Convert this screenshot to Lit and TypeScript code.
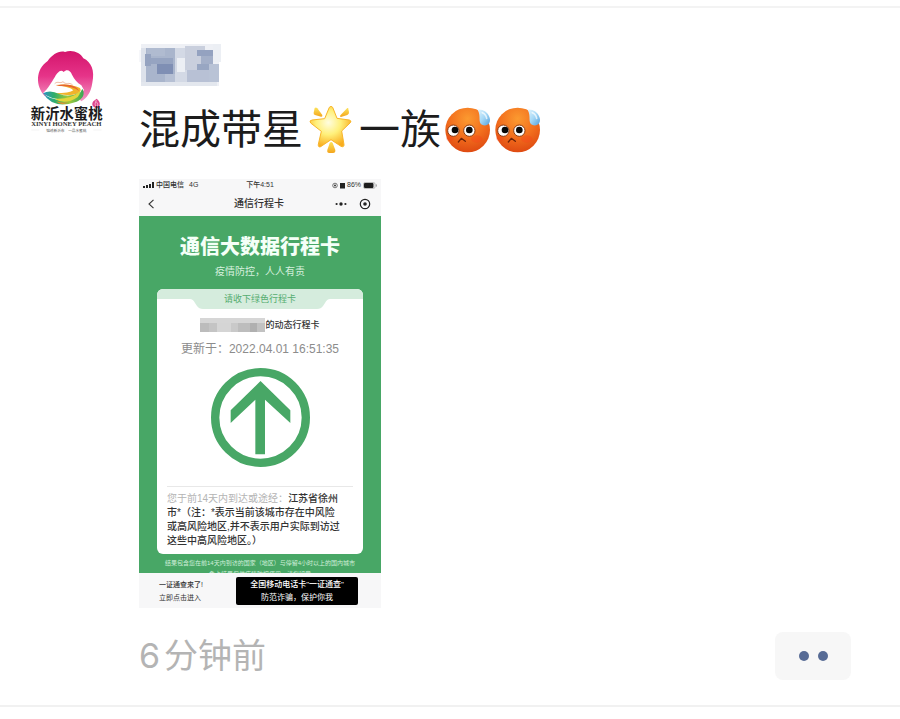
import { LitElement, html, svg, css } from "lit";
import { customElement } from "lit/decorators.js";

type Tile = [number, number, number, number, string];

const nameTiles: Tile[] = [
  [2, 2, 78, 42, "#eef0f5"],
  [0, 8, 8, 12, "#f6f7fa"],
  [2, 6, 8, 36, "#dde2eb"],
  [7, 6, 31, 34, "#a9b5cc"],
  [8, 6, 18, 8, "#b0bbd0"],
  [6, 12, 6, 12, "#95a3c0"],
  [12, 16, 22, 6, "#96a4c1"],
  [18, 22, 16, 10, "#7f8fb4"],
  [26, 32, 12, 8, "#b6c0d4"],
  [36, 6, 12, 34, "#d3d9e5"],
  [38, 16, 8, 14, "#eceff4"],
  [46, 4, 20, 24, "#c9cfdd"],
  [48, 28, 28, 12, "#b8c1d5"],
  [58, 8, 16, 6, "#94a2c0"],
  [62, 14, 12, 8, "#a3afc8"],
  [58, 22, 16, 6, "#98a6c2"],
  [70, 22, 10, 18, "#b9c3d6"],
  [74, 2, 8, 18, "#eceff4"],
  [2, 40, 76, 4, "#e3e7ee"],
];

const holderTiles: Tile[] = [
  [0, 0, 65, 14, "#d6d6d6"],
  [0, 5, 9, 9, "#bcbcbc"],
  [9, 5, 8, 9, "#c4c4c4"],
  [17, 5, 14, 9, "#d5d5d5"],
  [31, 5, 7, 9, "#c9c9c9"],
  [38, 5, 12, 9, "#bdbdbd"],
  [50, 5, 7, 9, "#b0b0b0"],
  [57, 5, 8, 9, "#c2c2c2"],
];

const tiles = (list: Tile[]) =>
  list.map(([x, y, w, h, c]) => svg`<rect x=${x} y=${y} width=${w} height=${h} fill=${c}></rect>`);

@customElement("travel-card")
export class TravelCard extends LitElement {
  static styles = css`
    :host {
      display: block;
      width: 242px;
      overflow: hidden;
      background: #f7f7f8;
      color: #333;
    }
    svg { display: block; }
    .status {
      display: grid;
      grid-template-columns: 1fr auto 1fr;
      align-items: center;
      height: 12px;
      padding: 0 4px;
      font-size: 7px;
      line-height: 12px;
      font-weight: 500;
    }
    .side { display: flex; align-items: center; gap: 2px; }
    .end { justify-content: flex-end; }
    .network { margin-left: 3px; }
    .nav {
      display: grid;
      grid-template-columns: 1fr auto 1fr;
      align-items: center;
      height: 25px;
      padding: 0 10px 0 8px;
    }
    .title { margin: 0; font-size: 10px; line-height: 24px; font-weight: 500; }
    button { border: 0; padding: 0; background: none; color: inherit; }
    .tools { display: flex; justify-content: flex-end; align-items: center; gap: 12px; }
    .green {
      background: #48a766;
      height: 357px;
      overflow: hidden;
      text-align: center;
      color: #fff;
    }
    .heading { margin: 0; padding-top: 15px; font-size: 20px; line-height: 32px; font-weight: 900; color: #f4fff7; }
    .slogan { margin: 0; font-size: 10px; line-height: 18px; color: #d6f0de; }
    .card {
      margin: 8px 18px 0;
      height: 265px;
      border-radius: 6px;
      overflow: hidden;
      background: #fff;
      color: #333;
    }
    .ribbon { display: grid; height: 20px; }
    .ribbon > * { grid-area: 1 / 1; }
    .ribbon svg { width: 100%; }
    .ribbon p { margin: 0; font-size: 9px; line-height: 20px; color: #55ad70; }
    .holder {
      display: flex;
      justify-content: center;
      align-items: center;
      height: 16px;
      margin-top: 8px;
      font-size: 9px;
      line-height: 16px;
      font-weight: 500;
    }
    .updated { margin: 0; padding-top: 6px; font-size: 12px; line-height: 20px; color: #8c8c8c; white-space: nowrap; }
    .arrow { margin: 9px auto 0; }
    .route {
      margin: 19px 10px 0;
      padding-top: 5px;
      border-top: 1px solid #e8e8e8;
      font-size: 10px;
      line-height: 14px;
      font-weight: 500;
      text-align: left;
      white-space: nowrap;
    }
    .muted { color: #b4b4b4; font-weight: 400; }
    .note { margin: 0; padding-top: 4px; font-size: 6px; line-height: 11px; white-space: nowrap; color: #d0efda; }
    .promo {
      display: flex;
      justify-content: space-between;
      align-items: center;
      height: 35px;
      padding: 0 23px 0 20px;
      font-size: 7px;
      line-height: 13px;
      color: inherit;
      text-decoration: none;
    }
    .banner {
      width: 122px;
      padding: 1px 0;
      border-radius: 2px;
      background: #000;
      color: #fff;
      font-size: 8px;
      text-align: center;
      white-space: nowrap;
    }
    .strong { font-weight: 500; }
  `;

  render() {
    return html`
      <div class="status">
        <div class="side">
          <svg width="11" height="7" viewBox="0 0 11 7" fill="#222" aria-hidden="true">
            <rect x="0" y="4" width="2" height="2"></rect>
            <rect x="3" y="3" width="2" height="3"></rect>
            <rect x="6" y="2" width="2" height="4"></rect>
            <rect x="9" y="0" width="2" height="6"></rect>
          </svg>
          <span>中国电信</span><span class="network">4G</span>
        </div>
        <span>下午4:51</span>
        <div class="side end">
          <svg width="13" height="7" viewBox="0 0 13 7" aria-hidden="true">
            <circle cx="3" cy="3.5" r="2.3" fill="none" stroke="#555" stroke-width=".8"></circle>
            <circle cx="3" cy="3.5" r="1" fill="#333"></circle>
            <rect x="8" y="1" width="5" height="5.5" fill="#222"></rect>
          </svg>
          <span>86%</span>
          <svg width="14" height="7" viewBox="0 0 14 7" aria-hidden="true">
            <rect x=".5" y=".5" width="11.5" height="6" rx="1.6" fill="none" stroke="#bbb"></rect>
            <rect x="1" y="1" width="9.5" height="5" rx="1" fill="#1d1d1d"></rect>
            <rect x="12.8" y="2.4" width="1" height="2.2" fill="#999"></rect>
          </svg>
        </div>
      </div>
      <div class="nav">
        <button aria-label="返回">
          <svg width="8" height="10" viewBox="0 0 8 10">
            <path d="M6.5 .8 2 5 6.5 9.2" fill="none" stroke="#333" stroke-width="1.1"></path>
          </svg>
        </button>
        <h2 class="title">通信行程卡</h2>
        <div class="tools">
          <button aria-label="更多">
            <svg width="12" height="6" viewBox="0 0 12 6" fill="#222">
              <circle cx="1.6" cy="3" r="1.1"></circle>
              <circle cx="6" cy="3" r="1.7"></circle>
              <circle cx="10.4" cy="3" r="1.1"></circle>
            </svg>
          </button>
          <button aria-label="关闭">
            <svg width="12" height="12" viewBox="0 0 12 12">
              <circle cx="6" cy="6" r="4.7" fill="none" stroke="#222" stroke-width="1.2"></circle>
              <circle cx="6" cy="6" r="1.8" fill="#222"></circle>
            </svg>
          </button>
        </div>
      </div>
      <div class="green">
        <h1 class="heading">通信大数据行程卡</h1>
        <p class="slogan">疫情防控，人人有责</p>
        <section class="card">
          <div class="ribbon">
            <svg height="20" viewBox="0 0 206 20" preserveAspectRatio="none" aria-hidden="true">
              <path d="M0 0H206V10H173Q170 10 168 14L166 17Q164 20 160 20H46Q42 20 40 17L38 14Q36 10 33 10H0Z" fill="#d5ecdd"></path>
            </svg>
            <p>请收下绿色行程卡</p>
          </div>
          <div class="holder">
            <svg width="65" height="14" viewBox="0 0 65 14" aria-hidden="true">${tiles(holderTiles)}</svg>
            <span>的动态行程卡</span>
          </div>
          <p class="updated">更新于：2022.04.01 16:51:35</p>
          <svg class="arrow" width="99" height="99" viewBox="0 0 297 297" aria-hidden="true">
            <circle cx="148.5" cy="148.5" r="136" fill="none" stroke="#48a766" stroke-width="25"></circle>
            <path d="M148.5 39 238 127V165L162 95V259H133V95L59 165V127Z" fill="#48a766"></path>
          </svg>
          <div class="route">
            <span class="muted">您于前14天内到达或途经：</span>江苏省徐州<br />
            市*（注：*表示当前该城市存在中风险<br />
            或高风险地区,并不表示用户实际到访过<br />
            这些中高风险地区。）
          </div>
        </section>
        <p class="note">
          结果包含您在前14天内到访的国家（地区）与停留4小时以上的国内城市<br />
          色卡结果仅供疫情防控使用，请您留意
        </p>
      </div>
      <a class="promo" href="#">
        <span><span class="strong">一证通查来了!</span><br />立即点击进入</span>
        <span class="banner"><span class="strong">全国移动电话卡"一证通查"</span><br />防范诈骗，保护你我</span>
      </a>
    `;
  }
}

@customElement("app-root")
export class AppRoot extends LitElement {
  static styles = css`
    :host {
      display: block;
      padding-top: 6px;
      background: #fff;
      font-family: "Liberation Sans", "Noto Sans CJK SC", sans-serif;
    }
    svg { display: block; }
    .post {
      display: grid;
      grid-template-columns: 75px 1fr;
      column-gap: 35px;
      padding: 34px 49px 25px 29px;
      border-top: 2px solid #f3f3f3;
      border-bottom: 2px solid #f1f1f1;
    }
    .avatar { margin-top: 6px; }
    .brush { font: 700 43px "Noto Sans CJK SC", sans-serif; }
    .latin { font: 700 20px "Liberation Serif", serif; }
    .tiny { font: 400 11px "Noto Sans CJK SC", sans-serif; }
    .message {
      display: flex;
      align-items: center;
      margin: 12px 0 19px;
      font-size: 41px;
      line-height: 60px;
      color: #1c1c1c;
      white-space: nowrap;
    }
    .emoji { flex: none; }
    .star { margin: 0 4px 0 6px; }
    .face { margin-left: 4px; }
    .foot {
      display: flex;
      justify-content: space-between;
      align-items: center;
      margin-top: 24px;
    }
    time { display: flex; gap: 4px; font-size: 34px; line-height: 48px; color: #b4b4b4; }
    .digit { font-family: Inter, sans-serif; }
    .more {
      display: flex;
      justify-content: center;
      align-items: center;
      gap: 9px;
      width: 76px;
      height: 48px;
      padding: 0;
      border: 0;
      border-radius: 8px;
      background: #f7f7f7;
    }
    .dot { width: 10px; height: 10px; border-radius: 50%; background: #576b95; }
  `;

  private face(id: string) {
    return html`
      <svg class="emoji face" width="46" height="46" viewBox="0 0 138 138" role="img" aria-label="冷汗">
        <defs>
          <radialGradient id="skin-${id}" cx=".5" cy=".25" r=".8">
            <stop offset="0" stop-color="#fb9a30"></stop>
            <stop offset=".5" stop-color="#f3701e"></stop>
            <stop offset="1" stop-color="#dc4510"></stop>
          </radialGradient>
          <linearGradient id="drop-${id}" x1="0" y1="0" x2="1" y2="1">
            <stop offset="0" stop-color="#e4f5fd"></stop>
            <stop offset=".5" stop-color="#a5d8f6"></stop>
            <stop offset="1" stop-color="#529fdc"></stop>
          </linearGradient>
        </defs>
        <circle cx="68" cy="69" r="67" fill="url(#skin-${id})"></circle>
        <ellipse cx="95" cy="96" rx="17" ry="11" fill="#f9431c" opacity=".35"></ellipse>
        <ellipse cx="15" cy="94" rx="11" ry="9" fill="#f9431c" opacity=".3"></ellipse>
        <circle cx="25" cy="71" r="17" fill="#fff" stroke="#8a3b13" stroke-width="3"></circle>
        <circle cx="73" cy="71" r="17" fill="#fff" stroke="#8a3b13" stroke-width="3"></circle>
        <circle cx="30" cy="69" r="10" fill="#080808"></circle>
        <circle cx="73" cy="69" r="10" fill="#080808"></circle>
        <path d="M40 105L49 94L61 103" fill="none" stroke="#6b2208" stroke-width="4" stroke-linecap="round" stroke-linejoin="round"></path>
        <path d="M98 8C112 6 128 14 134 32C139 51 124 60 111 53C98 46 109 28 98 8Z" fill="url(#drop-${id})"></path>
        <path d="M112 17C119 20 124 27 125 34" fill="none" stroke="#fff" stroke-width="5" stroke-linecap="round" opacity=".7"></path>
      </svg>
    `;
  }

  render() {
    return html`
      <article class="post">
        <svg class="avatar" width="75" height="90" viewBox="27 36 225 270" role="img" aria-label="新沂水蜜桃">
          <defs>
            <linearGradient id="peach" x1="0" y1="0" x2="0" y2="1">
              <stop offset="0" stop-color="#d4156c"></stop>
              <stop offset=".5" stop-color="#e63489"></stop>
              <stop offset="1" stop-color="#f39ac4"></stop>
            </linearGradient>
            <linearGradient id="river" x1="0" y1="0" x2="1" y2="0">
              <stop offset="0" stop-color="#2795c9"></stop>
              <stop offset=".3" stop-color="#2fae68"></stop>
              <stop offset=".65" stop-color="#9dc83c"></stop>
              <stop offset="1" stop-color="#37a857"></stop>
            </linearGradient>
          </defs>
          <path d="M74 180C46 150 46 100 83 75C98 55 117 43 135 48C157 40 181 50 190 67C214 78 225 104 217 140C213 170 200 186 184 196L150 160Z" fill="url(#peach)"></path>
          <path d="M70 170C86 156 93 140 105 122C112 111 121 98 131 108C141 98 151 104 156 116C163 130 171 139 184 148L192 162L170 186L95 184Z" fill="#fff"></path>
          <path d="M104 143C113 134 120 144 129 137C138 148 147 137 158 147" fill="none" stroke="#f0b9a0" stroke-width="3"></path>
          <path d="M106 147Q150 141 180 156Q190 170 160 176Q130 180 104 172Q150 172 160 163Q150 152 106 147Z" fill="#f0b32b"></path>
          <path d="M108 150Q158 148 177 165Q172 152 150 147Q126 143 108 150Z" fill="#e8662f"></path>
          <path d="M69 172Q90 160 118 174Q150 186 182 168Q178 186 140 190Q100 194 69 172Z" fill="url(#river)"></path>
          <path d="M69 172Q92 194 133 192Q178 186 187 158Q200 182 170 197Q100 222 69 172Z" fill="url(#river)"></path>
          <path d="M104 188Q150 192 180 166Q182 184 152 194Q124 202 104 188Z" fill="#e2d53b"></path>
          <path d="M108 196Q128 203 146 198Q124 211 108 196Z" fill="#ee8a2b"></path>
          <path d="M230 188C242 197 243 211 230 217C216 213 214 204 220 196Z" fill="#de468d"></path>
          <path d="M229 192Q221 204 229 216M229 197Q237 204 231 213" fill="none" stroke="#f9d0e2" stroke-width="2"></path>
          <text class="brush" x="140" y="249" text-anchor="middle" fill="#1c1c1c">新沂水蜜桃</text>
          <text class="latin" x="139" y="270" text-anchor="middle" fill="#333">XINYI HONEY PEACH</text>
          <path d="M34 282H58M220 282H245" stroke="#ddd" stroke-width="1"></path>
          <text class="tiny" x="139" y="287" text-anchor="middle" fill="#555">锦绣新沂市　一品水蜜桃</text>
        </svg>
        <div>
          <svg width="84" height="46" viewBox="0 0 84 46" role="img" aria-label="昵称">${tiles(nameTiles)}</svg>
          <div class="message">
            <span>混成带星</span>
            <svg class="emoji star" width="46" height="48" viewBox="0 0 138 144" role="img" aria-label="星星">
              <defs>
                <radialGradient id="glow" cx=".45" cy=".4" r=".6">
                  <stop offset="0" stop-color="#fffde0"></stop>
                  <stop offset=".5" stop-color="#fff07a"></stop>
                  <stop offset="1" stop-color="#f9ad1e"></stop>
                </radialGradient>
                <linearGradient id="ray" x1="0" y1="0" x2="0" y2="1">
                  <stop offset="0" stop-color="#fce35a"></stop>
                  <stop offset="1" stop-color="#f4a51c"></stop>
                </linearGradient>
              </defs>
              <path d="M61 4Q66-2 71 4L84 37L121 42Q130 45 123 51L98 75L105 116Q105 125 96 121L66 101L35 122Q27 125 28 115L37 76L5 51Q-1 44 9 42L47 38Z" fill="url(#glow)" stroke="#f8b52a" stroke-width="3"></path>
              <path d="M17 6Q21 3 25 7L40 27Q41 33 36 32L18 27Q13 25 14 20Z" fill="url(#ray)"></path>
              <path d="M115 6Q119 5 118 10L120 18Q121 24 115 27L96 33Q91 33 94 28Z" fill="url(#ray)"></path>
              <path d="M62 111Q67 105 71 111L79 132Q80 141 72 141H61Q53 141 55 132Z" fill="url(#ray)"></path>
            </svg>
            <span>一族</span>
            ${this.face("a")}${this.face("b")}
          </div>
          <travel-card></travel-card>
          <div class="foot">
            <time><span class="digit">6</span><span>分钟前</span></time>
            <button class="more" aria-label="评论"><span class="dot"></span><span class="dot"></span></button>
          </div>
        </div>
      </article>
    `;
  }
}
